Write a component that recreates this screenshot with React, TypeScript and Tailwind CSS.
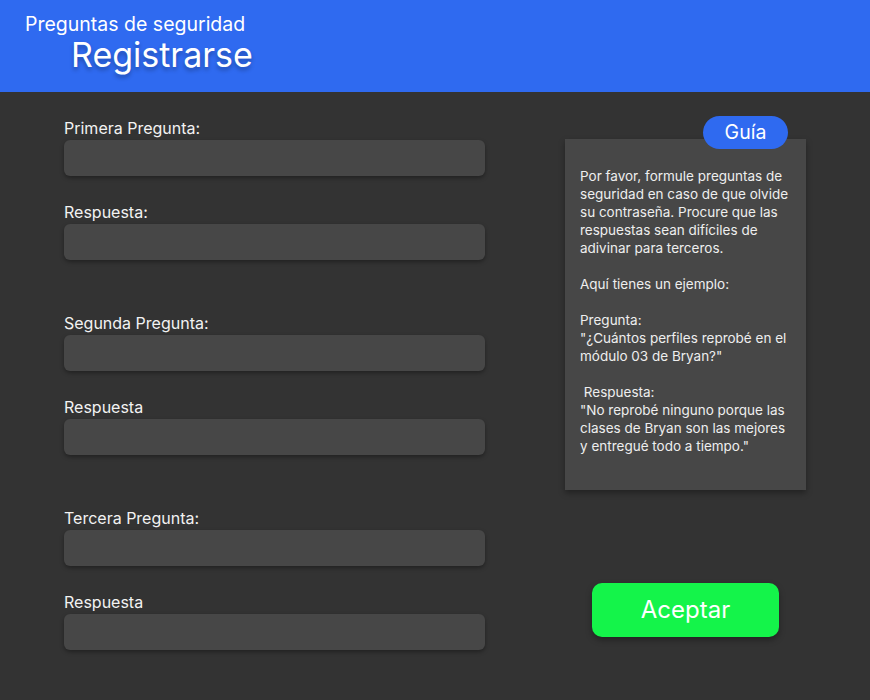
export default function App() {
  const groups = [
    { q: "Primera Pregunta:", a: "Respuesta:" },
    { q: "Segunda Pregunta:", a: "Respuesta" },
    { q: "Tercera Pregunta:", a: "Respuesta" },
  ];

  const guide = [
    "Por favor, formule preguntas de",
    "seguridad en caso de que olvide",
    "su contraseña. Procure que las",
    "respuestas sean difíciles de",
    "adivinar para terceros.",
    "",
    "Aquí tienes un ejemplo:",
    "",
    "Pregunta:",
    "\"¿Cuántos perfiles reprobé en el",
    "módulo 03 de Bryan?\"",
    "",
    "\u00a0Respuesta:",
    "\"No reprobé ninguno porque las",
    "clases de Bryan son las mejores",
    "y entregué todo a tiempo.\"",
  ];

  return (
    <div className="w-[870px] h-[700px] bg-[#333333] font-['Inter','Liberation_Sans',sans-serif] text-white overflow-hidden">
      {/* ==============================  Header  ============================== */}
      <header className="h-[92px] bg-[#2f6af0] pl-[25px] pt-[12px]">
        <div className="text-[19.5px] leading-[24px]">Preguntas de seguridad</div>
        <div className="pl-[46px] text-[34px] leading-[38px] [text-shadow:0_3px_4px_rgba(0,0,0,0.3)]">
          Registrarse
        </div>
      </header>

      <main className="flex pl-[64px] pt-[28px]">
        {/* Form */}
        <div className="w-[421px] flex flex-col">
          {groups.map((g, i) => (
            <div key={i} className={i > 0 ? "mt-[55px]" : ""}>
              <label className="block mb-[4px] text-[16px] leading-[16px] text-[#f2f2f2]">{g.q}</label>
              <input className="block w-full h-[36px] rounded-[6px] bg-[#474747] shadow-[0_2px_4px_rgba(0,0,0,0.35)] outline-none" />
              <label className="block mt-[28px] mb-[4px] text-[16px] leading-[16px] text-[#f2f2f2]">{g.a}</label>
              <input className="block w-full h-[36px] rounded-[6px] bg-[#474747] shadow-[0_2px_4px_rgba(0,0,0,0.35)] outline-none" />
            </div>
          ))}
        </div>

        {/* Guide */}
        <div className="ml-[80px] w-[241px] flex flex-col items-center -mt-[4px]">
          <div className="self-end mr-[18px] relative z-10 -mb-[10px] h-[33px] w-[85px] rounded-full bg-[#2f6af0] flex items-center justify-center text-[19.5px]">
            Guía
          </div>
          <div className="w-full h-[351px] bg-[#474747] shadow-[0_3px_6px_rgba(0,0,0,0.35)] pl-[15px] pt-[28px] text-[13.5px] leading-[18px] text-[#eeeeee]">
            {guide.map((l, i) => (
              <div key={i} className="h-[18px] whitespace-pre">{l}</div>
            ))}
          </div>
          <button className="mt-[93px] w-[187px] h-[54px] rounded-[10px] bg-[#14f44a] shadow-[0_3px_6px_rgba(0,0,0,0.35)] text-[24px] text-white">
            Aceptar
          </button>
        </div>
      </main>
    </div>
  );
}
